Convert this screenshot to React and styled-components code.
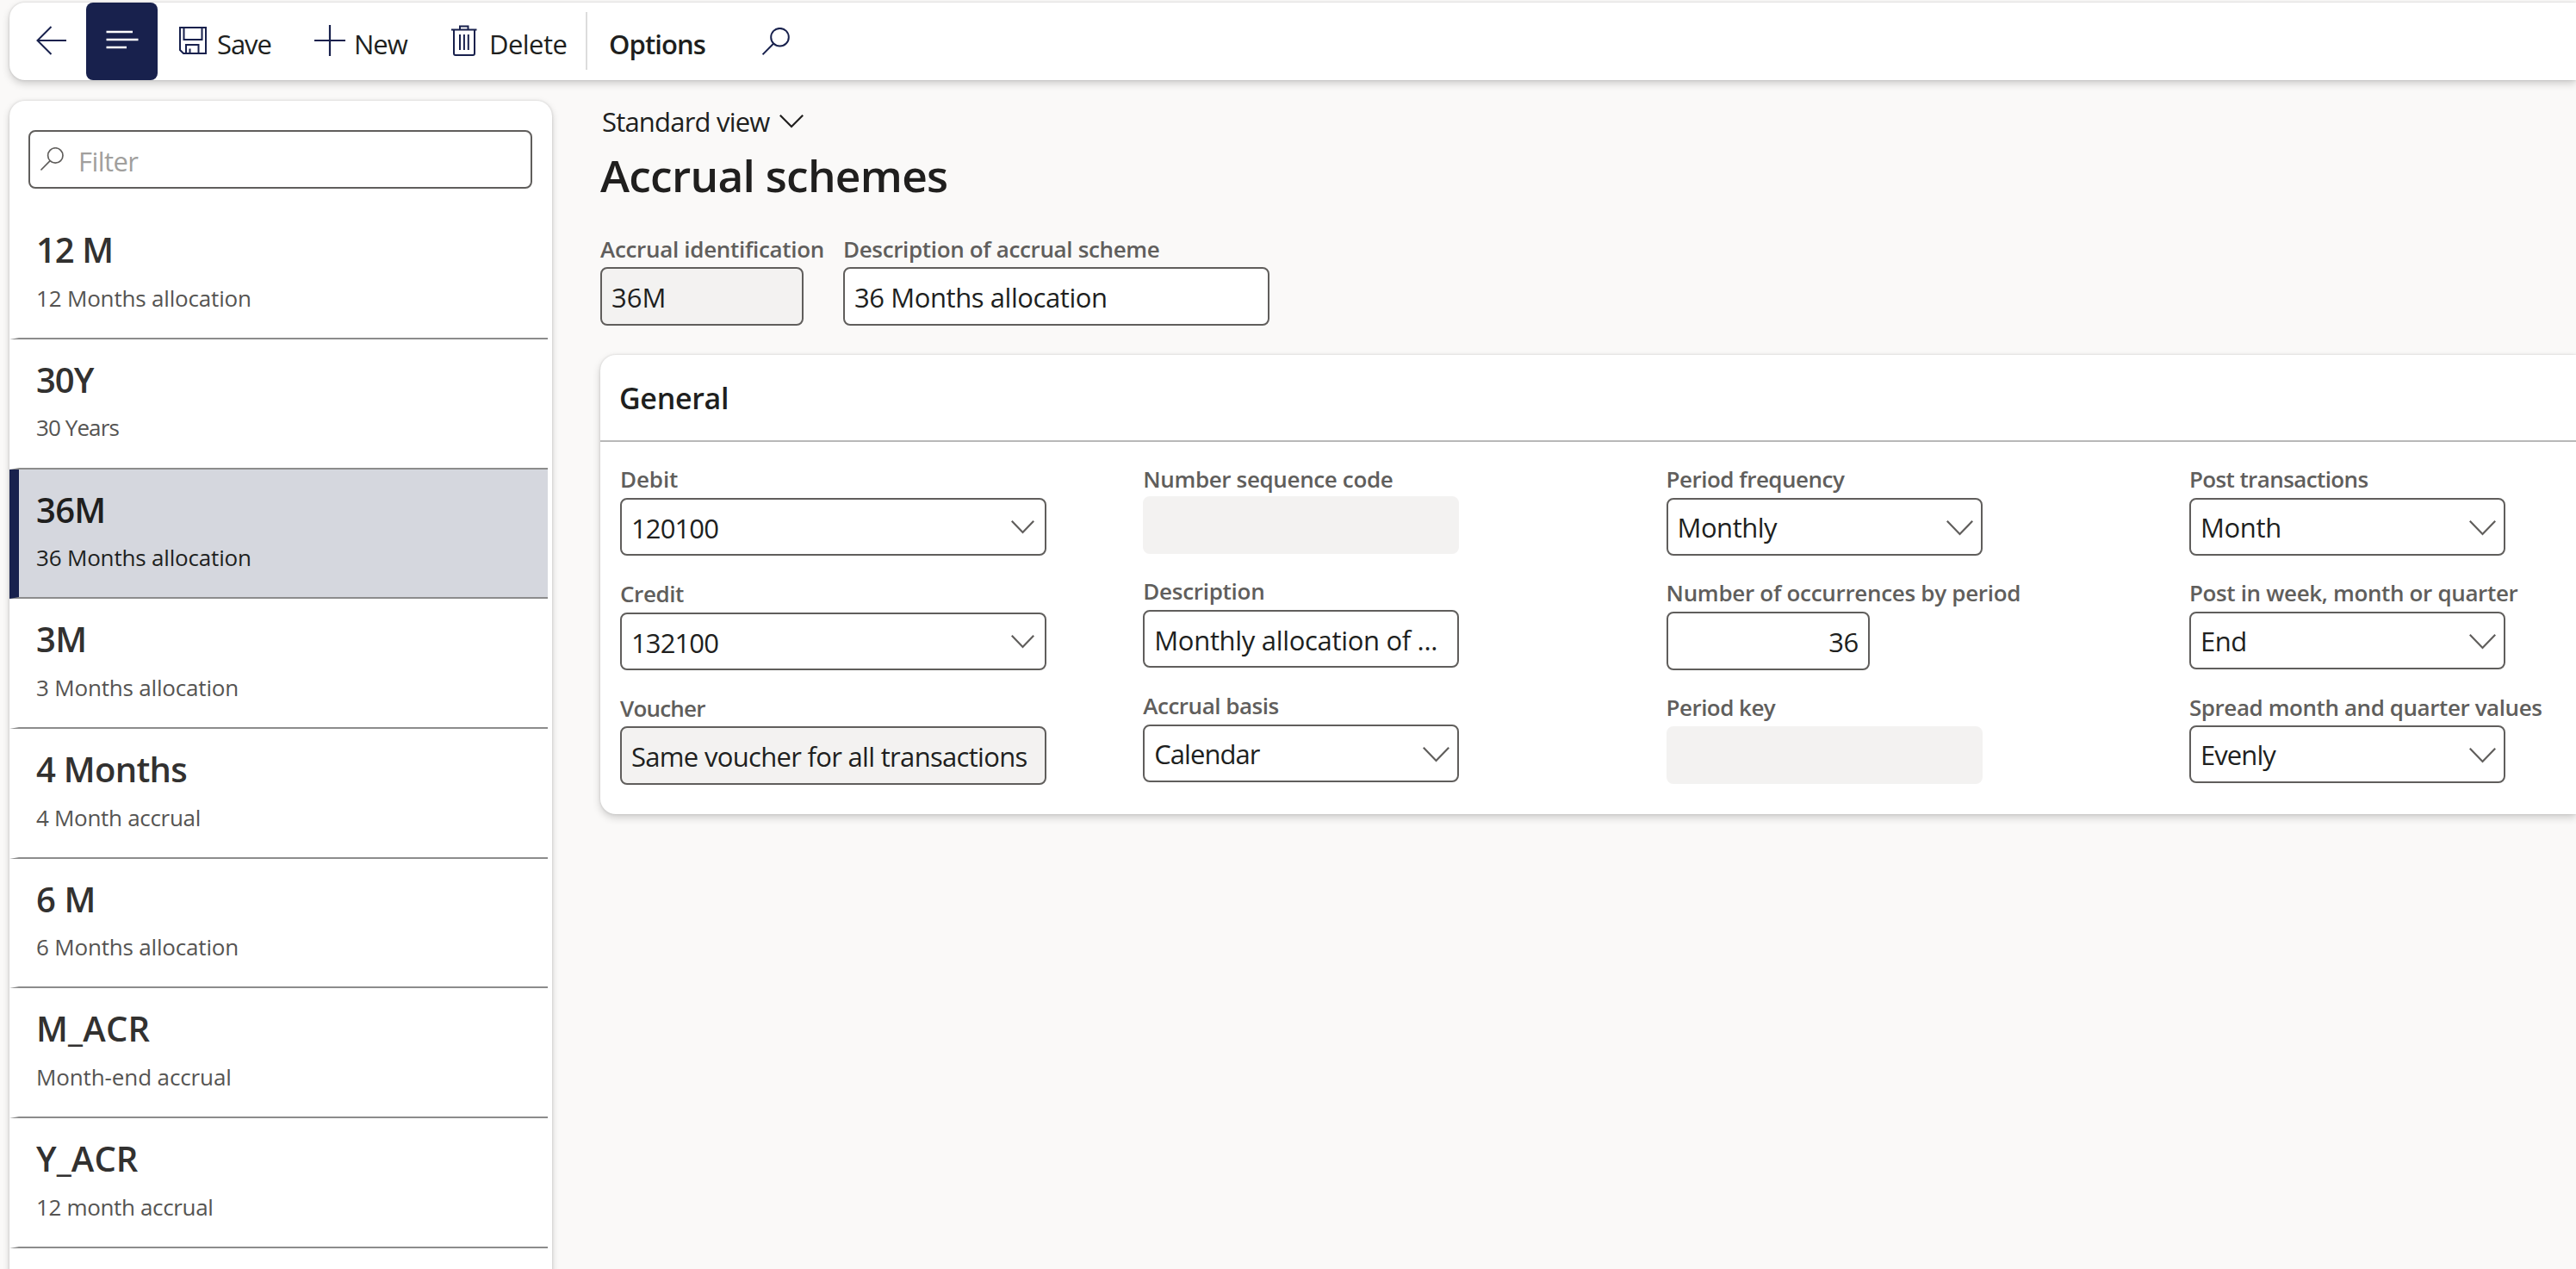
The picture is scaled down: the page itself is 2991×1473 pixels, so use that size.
import React, { useState } from "react";
import styled, { createGlobalStyle } from "styled-components";

const GlobalStyle = createGlobalStyle`
  * {
    box-sizing: border-box;
  }

  body {
    margin: 0;
    background: #faf9f8;
    color: #201f1e;
    font-family: "Open Sans", "Noto Sans", sans-serif;
    overflow: hidden;
  }
`;

const Page = styled.div`
  height: 1473px;
  padding: 3px 0 0 11px;
  overflow: hidden;
`;

const Toolbar = styled.header`
  display: flex;
  height: 90px;
  background: #fff;
  border-radius: 18px 0 0 18px;
  box-shadow: 0 4px 10px rgba(0, 0, 0, 0.18), 0 0 3px rgba(0, 0, 0, 0.16);
`;

const IconButton = styled.button`
  display: flex;
  align-items: center;
  justify-content: center;
  width: ${(props) => props.$width}px;
  padding: 0;
  border: 0;
  background: none;
`;

const BackButton = styled(IconButton)`
  padding: 0 0 2px 8px;
`;

const NavToggle = styled(IconButton)`
  padding-bottom: 5px;
  border-radius: 8px;
  background: #18214d;
`;

const ToolButton = styled.button`
  display: flex;
  align-items: flex-start;
  width: ${(props) => props.$width}px;
  padding: 26px 0 0 ${(props) => props.$left}px;
  border: 0;
  background: none;
  color: #201f1e;
  font-family: inherit;
  font-size: 31px;
  font-weight: ${(props) => (props.$bold ? 600 : 400)};
  letter-spacing: ${(props) => props.$spacing}px;
  line-height: 44px;
  white-space: nowrap;

  svg {
    flex: none;
    margin: ${(props) => props.$drop || 0}px ${(props) => props.$gap}px 0 0;
  }
`;

const Divider = styled.div`
  width: 2px;
  height: 67px;
  margin-top: 11px;
  background: #dcdcdc;
`;

const Columns = styled.div`
  display: flex;
  align-items: flex-start;
  gap: 56px;
  margin-top: 24px;
`;

const Sidebar = styled.aside`
  flex: none;
  width: 630px;
  height: 1400px;
  padding-top: 34px;
  background: #fff;
  border-radius: 18px 18px 0 0;
  box-shadow: 0 3px 9px rgba(0, 0, 0, 0.18), 0 0 3px rgba(0, 0, 0, 0.14);
`;

const FilterBox = styled.label`
  display: flex;
  width: 585px;
  height: 68px;
  margin: 0 0 24.3px 22px;
  padding: 18px 0 0 12px;
  border: 2px solid #605e5c;
  border-radius: 8px;
`;

const FilterInput = styled.input`
  flex: 1;
  height: 40px;
  margin: -4px 12px 0 17px;
  padding: 0;
  border: 0;
  outline: 0;
  background: none;
  font-family: inherit;
  font-size: 31px;
  letter-spacing: -0.56px;

  &::placeholder {
    color: #a19f9d;
    opacity: 1;
  }
`;

const SchemeItem = styled.div`
  width: 625px;
  height: 150.7px;
  padding: 22px 0 0 20px;
  border-left: 11px solid ${(props) => (props.$active ? "#18214d" : "transparent")};
  border-bottom: 2px solid #8c8c8c;
  background: ${(props) => (props.$active ? "#d5d7de" : "#fff")};
  background-clip: padding-box;
  color: ${(props) => (props.$active ? "#201f1e" : "#323130")};
`;

const SchemeName = styled.div`
  font-size: 40px;
  font-weight: 600;
  line-height: 50px;
  letter-spacing: ${(props) => props.$spacing}px;
`;

const SchemeText = styled.div`
  margin-top: 13.5px;
  color: ${(props) => (props.$active ? "#201f1e" : "#555452")};
  font-size: 26px;
  line-height: 34px;
  letter-spacing: ${(props) => props.$spacing}px;
`;

const Main = styled.main`
  flex: 1;
  min-width: 0;
  padding-top: 3px;
`;

const ViewPicker = styled.div`
  display: flex;
  height: 42px;
  padding-left: 2px;
  font-size: 31px;
  line-height: 42px;
  letter-spacing: -0.8px;

  svg {
    margin: 13px 0 0 11px;
  }
`;

const Title = styled.h1`
  margin: 6px 0 36px;
  font-size: 51.5px;
  font-weight: 600;
  line-height: 70px;
  letter-spacing: -0.75px;
`;

const HeaderFields = styled.div`
  display: flex;
  gap: 46px;
`;

const Field = styled.div`
  width: ${(props) => props.$width}px;
  margin-top: ${(props) => props.$top || 0}px;
`;

const Label = styled.div`
  height: 30px;
  margin-bottom: ${(props) => props.$gap}px;
  color: #605e5c;
  font-size: 26px;
  font-weight: 600;
  line-height: 30px;
  letter-spacing: ${(props) => props.$spacing}px;
  white-space: nowrap;
`;

const Box = styled.div`
  display: flex;
  justify-content: ${(props) => (props.$right ? "flex-end" : "space-between")};
  height: ${(props) => props.$height || 67}px;
  padding: 0 11px;
  border: 2px solid ${(props) => (props.$empty ? "#f3f2f1" : "#605e5c")};
  border-radius: 8px;
  background: ${(props) => (props.$disabled || props.$empty ? "#f3f2f1" : "#fff")};
  font-size: 31px;
  line-height: ${(props) => (props.$select ? 65 : 67)}px;
  letter-spacing: ${(props) => props.$spacing}px;
  white-space: nowrap;

  svg {
    flex: none;
    margin: ${(props) => (props.$lookup ? "24px 1px 0 0" : "24px -2px 0 0")};
  }
`;

const Card = styled.section`
  height: 533px;
  margin-top: 34px;
  background: #fff;
  border-radius: 18px 0 0 18px;
  box-shadow: 0 4px 10px rgba(0, 0, 0, 0.18), 0 0 3px rgba(0, 0, 0, 0.14);
`;

const CardHeader = styled.h2`
  height: 101px;
  margin: 0;
  padding: 1px 0 0 22px;
  border-bottom: 2px solid #b8b8b8;
  font-size: 34px;
  font-weight: 600;
  line-height: 99px;
  letter-spacing: -0.3px;
`;

const FieldGrid = styled.div`
  display: grid;
  grid-template-columns: repeat(4, 607.3px);
  padding: 28px 0 0 23px;
`;

const ArrowLeft = () => (
  <svg width="36" height="34" viewBox="0 0 36 34" fill="none" stroke="#18214d" strokeWidth="2">
    <path d="M35 17H1.500M17.500 1L1.500 17L17.500 33" />
  </svg>
);

const MenuLines = () => (
  <svg width="38" height="22" viewBox="0 0 38 22" fill="none" stroke="#fff" strokeWidth="2.400">
    <path d="M0.500 2H31M0.500 11H37.500M0.500 20H24" />
  </svg>
);

const SaveIcon = () => (
  <svg width="32" height="32" viewBox="0 0 32 32" fill="none" stroke="#18214d" strokeWidth="2">
    <path d="M1 1H31V31H5L1 27ZM5.500 1V15H26.500V1M8 31V21H22.500V31M12.500 31V25.500" />
  </svg>
);

const PlusIcon = () => (
  <svg width="36" height="36" viewBox="0 0 36 36" fill="none" stroke="#18214d" strokeWidth="2.200">
    <path d="M18 0V36M0 18H36" />
  </svg>
);

const TrashIcon = () => (
  <svg width="30" height="36" viewBox="0 0 30 36" fill="none" stroke="#18214d" strokeWidth="2">
    <path d="M0 5.500H29.500M10 5V1.500H19.500V5M3 6V33Q3 35 5 35H25Q27 35 27 33V6M10 11V29M14.900 11V29M19.800 11V29" />
  </svg>
);

const SearchIcon = ({ size, color }) => (
  <svg width={size} height={size} viewBox="0 0 32 32" fill="none" stroke={color} strokeWidth="2">
    <circle cx="20.500" cy="11.200" r="10.300" />
    <path d="M13.200 18.500L0.500 31.300" />
  </svg>
);

const Chevron = ({ width, height, color }) => (
  <svg width={width} height={height} viewBox={`0 0 ${width} ${height}`} fill="none" stroke={color} strokeWidth="2.200">
    <path d={`M0.800 0.800L${width / 2} ${height - 2}L${width - 0.8} 0.800`} />
  </svg>
);

const schemes = [
  { name: "12 M", text: "12 Months allocation", ns: -1, ts: -0.18 },
  { name: "30Y", text: "30 Years", ns: -1, ts: -0.9 },
  { name: "36M", text: "36 Months allocation", ns: -0.7, ts: -0.18 },
  { name: "3M", text: "3 Months allocation", ns: -0.7, ts: -0.18 },
  { name: "4 Months", text: "4 Month accrual", ns: -0.7, ts: -0.3 },
  { name: "6 M", text: "6 Months allocation", ns: -0.4, ts: -0.18 },
  { name: "M_ACR", text: "Month-end accrual", ns: 0.2, ts: -0.12 },
  { name: "Y_ACR", text: "12 month accrual", ns: 0.1, ts: -0.35 },
];

// one array per column of the General tab
const columns = [
  [
    { label: "Debit", value: "120100", type: "lookup", width: 495, ls: -0.1, vs: -0.9 },
    { label: "Credit", value: "132100", type: "lookup", width: 495, top: 29, ls: -0.4, vs: -0.9 },
    { label: "Voucher", value: "Same voucher for all transactions", type: "disabled", width: 495, top: 29, gap: 6, height: 68, ls: -0.8, vs: -0.69 },
  ],
  [
    { label: "Number sequence code", value: "", type: "empty", width: 367, gap: 5, ls: -0.36 },
    { label: "Description", value: "Monthly allocation of ...", type: "text", width: 367, top: 28, ls: -0.28, vs: -0.32 },
    { label: "Accrual basis", value: "Calendar", type: "select", width: 367, top: 29, ls: -0.48, vs: -0.97 },
  ],
  [
    { label: "Period frequency", value: "Monthly", type: "select", width: 367, ls: -0.51, vs: -0.5 },
    { label: "Number of occurrences by period", value: "36", type: "number", width: 236, top: 28, height: 68, ls: -0.3, vs: -0.6 },
    { label: "Period key", value: "", type: "empty", width: 367, top: 28, ls: -0.54 },
  ],
  [
    { label: "Post transactions", value: "Month", type: "select", width: 367, ls: -0.6, vs: -0.3 },
    { label: "Post in week, month or quarter", value: "End", type: "select", width: 367, top: 28, ls: -0.35, vs: -0.4 },
    { label: "Spread month and quarter values", value: "Evenly", type: "select", width: 367, top: 29, gap: 6, ls: -0.42, vs: -0.9 },
  ],
];

const FormField = ({ field }) => {
  const { label, value, type, width, top, gap = 7, height, ls, vs } = field;
  return (
    <Field $width={width} $top={top}>
      <Label $gap={gap} $spacing={ls}>{label}</Label>
      <Box
        $height={height}
        $spacing={vs}
        $right={type === "number"}
        $lookup={type === "lookup"}
        $select={type === "select"}
        $disabled={type === "disabled"}
        $empty={type === "empty"}
      >
        <span>{value}</span>
        {type === "lookup" && <Chevron width={27} height={16} color="#605e5c" />}
        {type === "select" && <Chevron width={31} height={18} color="#605e5c" />}
      </Box>
    </Field>
  );
};

const App = () => {
  const [selected, setSelected] = useState("36M");
  const [filter, setFilter] = useState("");

  //list is filtered by id or description
  const visible = schemes.filter(({ name, text }) =>
    `${name} ${text}`.toLowerCase().includes(filter.toLowerCase())
  );

  return (
    <Page>
      <GlobalStyle />
      <Toolbar>
        <BackButton $width={89}>
          <ArrowLeft />
        </BackButton>
        <NavToggle $width={83}>
          <MenuLines />
        </NavToggle>
        <ToolButton $width={182} $left={25} $gap={12} $drop={2} $spacing={-1.07}>
          <SaveIcon />
          Save
        </ToolButton>
        <ToolButton $width={159} $left={0} $gap={10} $spacing={-1}>
          <PlusIcon />
          New
        </ToolButton>
        <ToolButton $width={156} $left={0} $gap={14} $spacing={-0.54}>
          <TrashIcon />
          Delete
        </ToolButton>
        <Divider />
        <ToolButton $width={203} $left={25} $gap={0} $spacing={-0.9} $bold>
          Options
        </ToolButton>
        <ToolButton $width={60} $left={0} $gap={0} $drop={3}>
          <SearchIcon size={32} color="#18214d" />
        </ToolButton>
      </Toolbar>

      <Columns>
        <Sidebar>
          <FilterBox>
            <SearchIcon size={27} color="#605e5c" />
            <FilterInput placeholder="Filter" value={filter} onChange={(e) => setFilter(e.target.value)} />
          </FilterBox>
          {visible.map(({ name, text, ns, ts }) => (
            <SchemeItem key={name} $active={name === selected} onClick={() => setSelected(name)}>
              <SchemeName $spacing={ns}>{name}</SchemeName>
              <SchemeText $active={name === selected} $spacing={ts}>{text}</SchemeText>
            </SchemeItem>
          ))}
        </Sidebar>

        <Main>
          <ViewPicker>
            Standard view
            <Chevron width={28} height={16} color="#201f1e" />
          </ViewPicker>
          <Title>Accrual schemes</Title>
          <HeaderFields>
            <FormField field={{ label: "Accrual identification", value: "36M", type: "disabled", width: 236, gap: 6, height: 68, ls: -0.31, vs: 0 }} />
            <FormField field={{ label: "Description of accrual scheme", value: "36 Months allocation", type: "text", width: 495, gap: 6, height: 68, ls: -0.35, vs: -0.42 }} />
          </HeaderFields>
          <Card>
            <CardHeader>General</CardHeader>
            <FieldGrid>
              {columns.map((fields, index) => (
                <div key={index}>
                  {fields.map((field) => (
                    <FormField key={field.label} field={field} />
                  ))}
                </div>
              ))}
            </FieldGrid>
          </Card>
        </Main>
      </Columns>
    </Page>
  );
};

export default App;
